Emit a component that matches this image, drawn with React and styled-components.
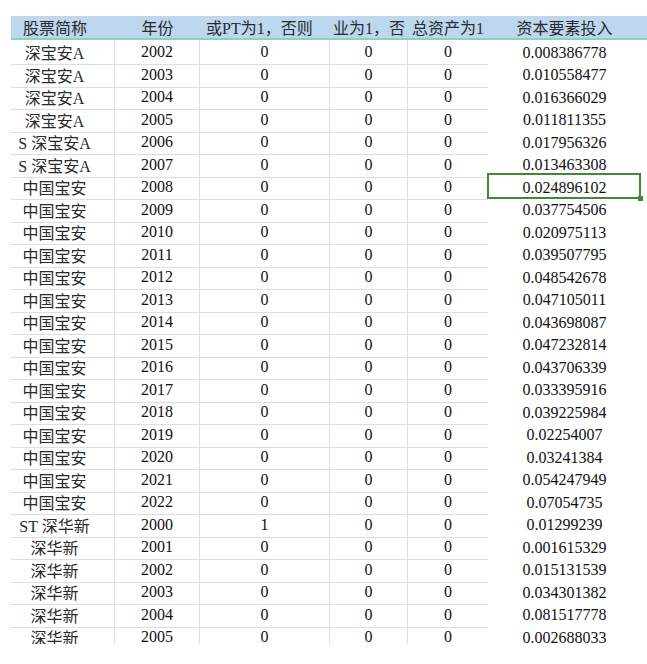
import React from "react";
import styled, { createGlobalStyle, css } from "styled-components";

const GlobalStyle = createGlobalStyle`
  html, body { margin: 0; padding: 0; background: #ffffff; }
  * { box-sizing: border-box; }
`;

const COLS = "104px 85px 130px 78px 80px 153px 6px";

const Page = styled.div`
  height: 644px;
  overflow: hidden;
  padding: 16px 0 0 11px;
  font-family: "Liberation Serif", "Noto Sans CJK SC", serif;
  font-size: 16px;
  color: #111;
`;

const HeaderRow = styled.div`
  display: grid;
  grid-template-columns: ${COLS};
  height: 24px;
  background: #bdd7ee;
  border-bottom: 2px solid #86d5bb;
`;

const HeaderCell = styled.div`
  display: flex;
  align-items: center;
  justify-content: ${(p) => (p.$start ? "flex-start" : "center")};
  overflow: hidden;
  white-space: nowrap;
  color: #2b2b2b;
  padding-left: ${(p) => p.$padLeft || 0}px;
  padding-right: ${(p) => p.$padRight || 0}px;
`;

const Row = styled.div`
  display: grid;
  grid-template-columns: ${COLS};
  height: 22.5px;
`;

const Cell = styled.div`
  position: relative;
  display: flex;
  align-items: center;
  justify-content: center;
  white-space: pre;
  padding-right: ${(p) => p.$padRight || 0}px;
  color: ${(p) => (p.$name ? "#2a2a2a" : "#111")};
  ${(p) =>
    p.$grid &&
    css`
      border-bottom: 1px solid #dedede;
    `}
  ${(p) =>
    p.$vline &&
    css`
      border-right: 1px solid #dedede;
    `}
  ${(p) =>
    p.$selected &&
    css`
      &::after {
        content: "";
        position: absolute;
        top: -2px;
        left: -1px;
        right: 0;
        bottom: 1px;
        border: 2px solid #3f8a33;
      }
      &::before {
        content: "";
        position: absolute;
        right: -2px;
        bottom: -1px;
        width: 5px;
        height: 5px;
        background: #3f8a33;
        z-index: 1;
      }
    `}
`;

const rows = [
  ["深宝安A", 2002, 0, "0.008386778"],
  ["深宝安A", 2003, 0, "0.010558477"],
  ["深宝安A", 2004, 0, "0.016366029"],
  ["深宝安A", 2005, 0, "0.011811355"],
  ["S 深宝安A", 2006, 0, "0.017956326"],
  ["S 深宝安A", 2007, 0, "0.013463308"],
  ["中国宝安", 2008, 0, "0.024896102"],
  ["中国宝安", 2009, 0, "0.037754506"],
  ["中国宝安", 2010, 0, "0.020975113"],
  ["中国宝安", 2011, 0, "0.039507795"],
  ["中国宝安", 2012, 0, "0.048542678"],
  ["中国宝安", 2013, 0, "0.047105011"],
  ["中国宝安", 2014, 0, "0.043698087"],
  ["中国宝安", 2015, 0, "0.047232814"],
  ["中国宝安", 2016, 0, "0.043706339"],
  ["中国宝安", 2017, 0, "0.033395916"],
  ["中国宝安", 2018, 0, "0.039225984"],
  ["中国宝安", 2019, 0, "0.02254007"],
  ["中国宝安", 2020, 0, "0.03241384"],
  ["中国宝安", 2021, 0, "0.054247949"],
  ["中国宝安", 2022, 0, "0.07054735"],
  ["ST 深华新", 2000, 1, "0.01299239"],
  ["深华新", 2001, 0, "0.001615329"],
  ["深华新", 2002, 0, "0.015131539"],
  ["深华新", 2003, 0, "0.034301382"],
  ["深华新", 2004, 0, "0.081517778"],
  ["深华新", 2005, 0, "0.002688033"],
];

export default function App() {
  return (
    <>
      <GlobalStyle />
      <Page>
        <HeaderRow>
          <HeaderCell $padRight={16}>股票简称</HeaderCell>
          <HeaderCell>年份</HeaderCell>
          <HeaderCell $start $padLeft={6}>或PT为1，否则</HeaderCell>
          <HeaderCell $start $padLeft={3}>业为1，否</HeaderCell>
          <HeaderCell $start $padLeft={4}>总资产为1</HeaderCell>
          <HeaderCell>资本要素投入</HeaderCell>
          <HeaderCell />
        </HeaderRow>
        {rows.map(([name, year, st, value], i) => (
          <Row key={i}>
            <Cell $grid $vline $name $padRight={16}>{name}</Cell>
            <Cell $grid $vline>{year}</Cell>
            <Cell $grid $vline>{st}</Cell>
            <Cell $grid $vline>0</Cell>
            <Cell $grid>0</Cell>
            <Cell $selected={i === 6}>{value}</Cell>
            <Cell />
          </Row>
        ))}
      </Page>
    </>
  );
}
